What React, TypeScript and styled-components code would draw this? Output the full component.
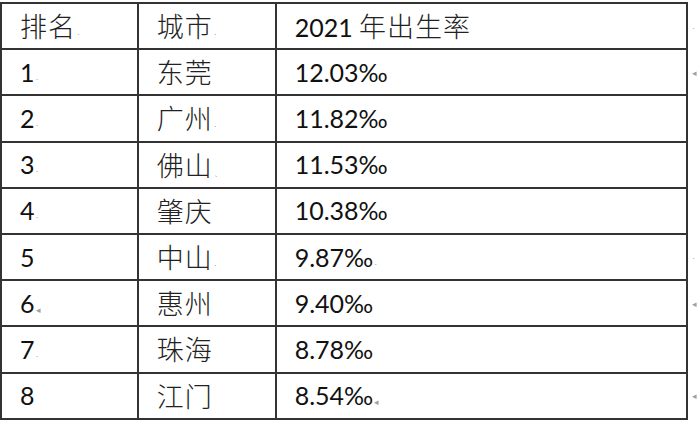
import React from 'react';
import styled, { createGlobalStyle } from 'styled-components';

const Global = createGlobalStyle`
  html, body { margin: 0; padding: 0; background: #ffffff; }
  body { width: 700px; height: 430px; overflow: hidden; }
`;

const Page = styled.div`
  padding: 2px 0 0 0;
`;

const Table = styled.table`
  border-collapse: collapse;
  table-layout: fixed;
`;

const Row = styled.tr`
  height: 46.2px;
`;

const Cell = styled.td<{ $w: number }>`
  width: ${(p) => p.$w}px;
  border: 2px solid #333333;
  padding: 0 0 0 18px;
  box-sizing: border-box;
  vertical-align: middle;
  white-space: nowrap;
  line-height: 1;
`;

const EndCell = styled.td`
  border: none;
  width: 7px;
  padding: 0 0 0 3px;
  vertical-align: middle;
  line-height: 1;
`;

const Num = styled.span`
  font-family: Lato, "Liberation Sans", sans-serif;
  font-size: 25px;
  color: #111111;
`;

const Han = styled.span`
  font-family: "Noto Sans CJK SC", sans-serif;
  font-weight: 300;
  font-size: 27px;
  color: #222222;
  letter-spacing: 1px;
`;

const Mark = styled.span<{ $raise?: boolean }>`
  font-family: "Liberation Sans", sans-serif;
  font-size: 9px;
  color: #a0a0a0;
  margin-left: 1px;
  vertical-align: ${(p) => (p.$raise ? 'middle' : 'baseline')};
`;

type RowData = {
  rank: string;
  city: string;
  rate: string;
  m1?: string;
  m2?: string;
  m3?: string;
  end?: string;
};

const rows: RowData[] = [
  { rank: '1', city: '东莞', rate: '12.03‰', m1: '·', end: '◂' },
  { rank: '2', city: '广州', rate: '11.82‰', m1: '·', m2: '·' },
  { rank: '3', city: '佛山', rate: '11.53‰', m1: '·', m2: '、' },
  { rank: '4', city: '肇庆', rate: '10.38‰', m1: '·' },
  { rank: '5', city: '中山', rate: '9.87‰', m2: '·', m3: '·', end: '·' },
  { rank: '6', city: '惠州', rate: '9.40‰', m1: '◂', end: '◂' },
  { rank: '7', city: '珠海', rate: '8.78‰', m1: '·' },
  { rank: '8', city: '江门', rate: '8.54‰', m3: '◂', end: '◂' },
];

export default function App() {
  return (
    <Page>
      <Global />
      <Table>
        <tbody>
          <Row>
            <Cell $w={138}>
              <Han>排名</Han>
              <Mark>·</Mark>
            </Cell>
            <Cell $w={139}>
              <Han>城市</Han>
              <Mark>·</Mark>
            </Cell>
            <Cell $w={416}>
              <Num>2021 </Num>
              <Han>年出生率</Han>
            </Cell>
            <EndCell>
              <Mark>·</Mark>
            </EndCell>
          </Row>
          {rows.map((r) => (
            <Row key={r.rank}>
              <Cell $w={138}>
                <Num>{r.rank}</Num>
                {r.m1 && <Mark>{r.m1}</Mark>}
              </Cell>
              <Cell $w={139}>
                <Han>{r.city}</Han>
                {r.m2 && <Mark>{r.m2}</Mark>}
              </Cell>
              <Cell $w={416}>
                <Num>{r.rate}</Num>
                {r.m3 && <Mark>{r.m3}</Mark>}
              </Cell>
              <EndCell>{r.end && <Mark $raise>{r.end}</Mark>}</EndCell>
            </Row>
          ))}
        </tbody>
      </Table>
    </Page>
  );
}
